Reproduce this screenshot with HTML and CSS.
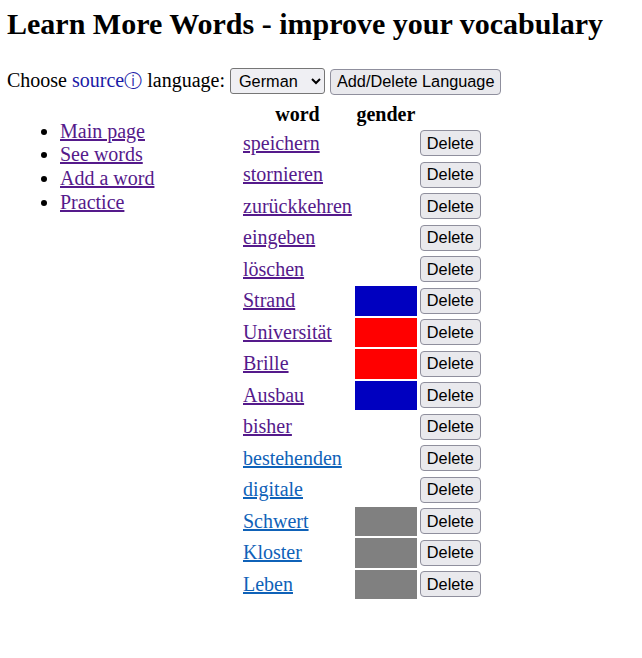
FILE: index.html
```html
<!DOCTYPE html>
<html lang="en">
<head>
<meta charset="utf-8">
<title>Learn More Words</title>
<link rel="stylesheet" href="styles.css">
</head>
<body>
<h1 class="title">Learn More Words - improve your vocabulary</h1>
<p class="lang-line">Choose <a class="info-link" href="#">source<span class="info-icon">&#9432;</span></a> language:
  <select class="lang-select"><option>German</option></select>
  <button class="btn">Add/Delete Language</button>
</p>
<div class="layout">
  <ul class="nav">
    <li><a class="visited" href="#">Main page</a></li>
    <li><a class="visited" href="#">See words</a></li>
    <li><a class="visited" href="#">Add a word</a></li>
    <li><a class="visited" href="#">Practice</a></li>
  </ul>
  <table class="words">
    <thead>
      <tr><th>word</th><th>gender</th><th></th></tr>
    </thead>
    <tbody>
      <tr><td><a class="visited" href="#">speichern</a></td><td class="g"></td><td><button class="btn">Delete</button></td></tr>
      <tr><td><a class="visited" href="#">stornieren</a></td><td class="g"></td><td><button class="btn">Delete</button></td></tr>
      <tr><td><a class="visited" href="#">zurückkehren</a></td><td class="g"></td><td><button class="btn">Delete</button></td></tr>
      <tr><td><a class="visited" href="#">eingeben</a></td><td class="g"></td><td><button class="btn">Delete</button></td></tr>
      <tr><td><a class="visited" href="#">löschen</a></td><td class="g"></td><td><button class="btn">Delete</button></td></tr>
      <tr><td><a class="visited" href="#">Strand</a></td><td class="g masc"></td><td><button class="btn">Delete</button></td></tr>
      <tr><td><a class="visited" href="#">Universität</a></td><td class="g fem"></td><td><button class="btn">Delete</button></td></tr>
      <tr><td><a class="visited" href="#">Brille</a></td><td class="g fem"></td><td><button class="btn">Delete</button></td></tr>
      <tr><td><a class="visited" href="#">Ausbau</a></td><td class="g masc"></td><td><button class="btn">Delete</button></td></tr>
      <tr><td><a class="visited" href="#">bisher</a></td><td class="g"></td><td><button class="btn">Delete</button></td></tr>
      <tr><td><a class="fresh" href="#">bestehenden</a></td><td class="g"></td><td><button class="btn">Delete</button></td></tr>
      <tr><td><a class="fresh" href="#">digitale</a></td><td class="g"></td><td><button class="btn">Delete</button></td></tr>
      <tr><td><a class="fresh" href="#">Schwert</a></td><td class="g neut"></td><td><button class="btn">Delete</button></td></tr>
      <tr><td><a class="fresh" href="#">Kloster</a></td><td class="g neut"></td><td><button class="btn">Delete</button></td></tr>
      <tr><td><a class="fresh" href="#">Leben</a></td><td class="g neut"></td><td><button class="btn">Delete</button></td></tr>
    </tbody>
  </table>
</div>
</body>
</html>
```

FILE: styles.css
```css
html, body {
  background: #ffffff;
}
body {
  margin: 0;
  padding: 0 7px;
  font-family: "Liberation Serif", "Times New Roman", serif;
  font-size: 20px;
  color: #000;
}
.title {
  font-size: 30px;
  font-weight: bold;
  margin: 7px 0 0;
  line-height: 34px;
}
.lang-line {
  margin: 26px 0 0;
  line-height: 26px;
}
.info-link {
  color: #1a1aa6;
  text-decoration: none;
}
.info-icon {
  font-family: "DejaVu Sans", sans-serif;
  font-size: 17.5px;
}
.lang-select {
  font-family: "Liberation Sans", Arial, sans-serif;
  font-size: 16.3px;
  height: 26px;
  width: 95px;
  padding: 0 4px;
  border: 1px solid #767676;
  border-radius: 3px;
  background: #efeff3;
  color: #000;
  vertical-align: baseline;
}
.btn {
  font-family: "Liberation Sans", Arial, sans-serif;
  font-size: 16.3px;
  height: 26px;
  padding: 0 6px;
  border: 1px solid #8f8f9d;
  border-radius: 4px;
  background: #e9e9ed;
  color: #000;
}
.layout {
  display: flex;
  align-items: flex-start;
  margin-top: 5px;
}
.nav {
  width: 180px;
  margin: 20px 0 0;
  padding-left: 53px;
  line-height: 23.7px;
}
.visited {
  color: #551a8b;
}
.fresh {
  color: #0f62b8;
}
.words {
  border-collapse: separate;
  border-spacing: 2.5px 2px;
}
.words th {
  padding: 1px;
  font-weight: bold;
  line-height: 23px;
}
.words td {
  padding: 1px;
  height: 27.5px;
  line-height: 23px;
}
.words td.g {
  width: 60px;
}
.masc {
  background: #0000c0;
}
.fem {
  background: #ff0000;
}
.neut {
  background: #808080;
}
```
